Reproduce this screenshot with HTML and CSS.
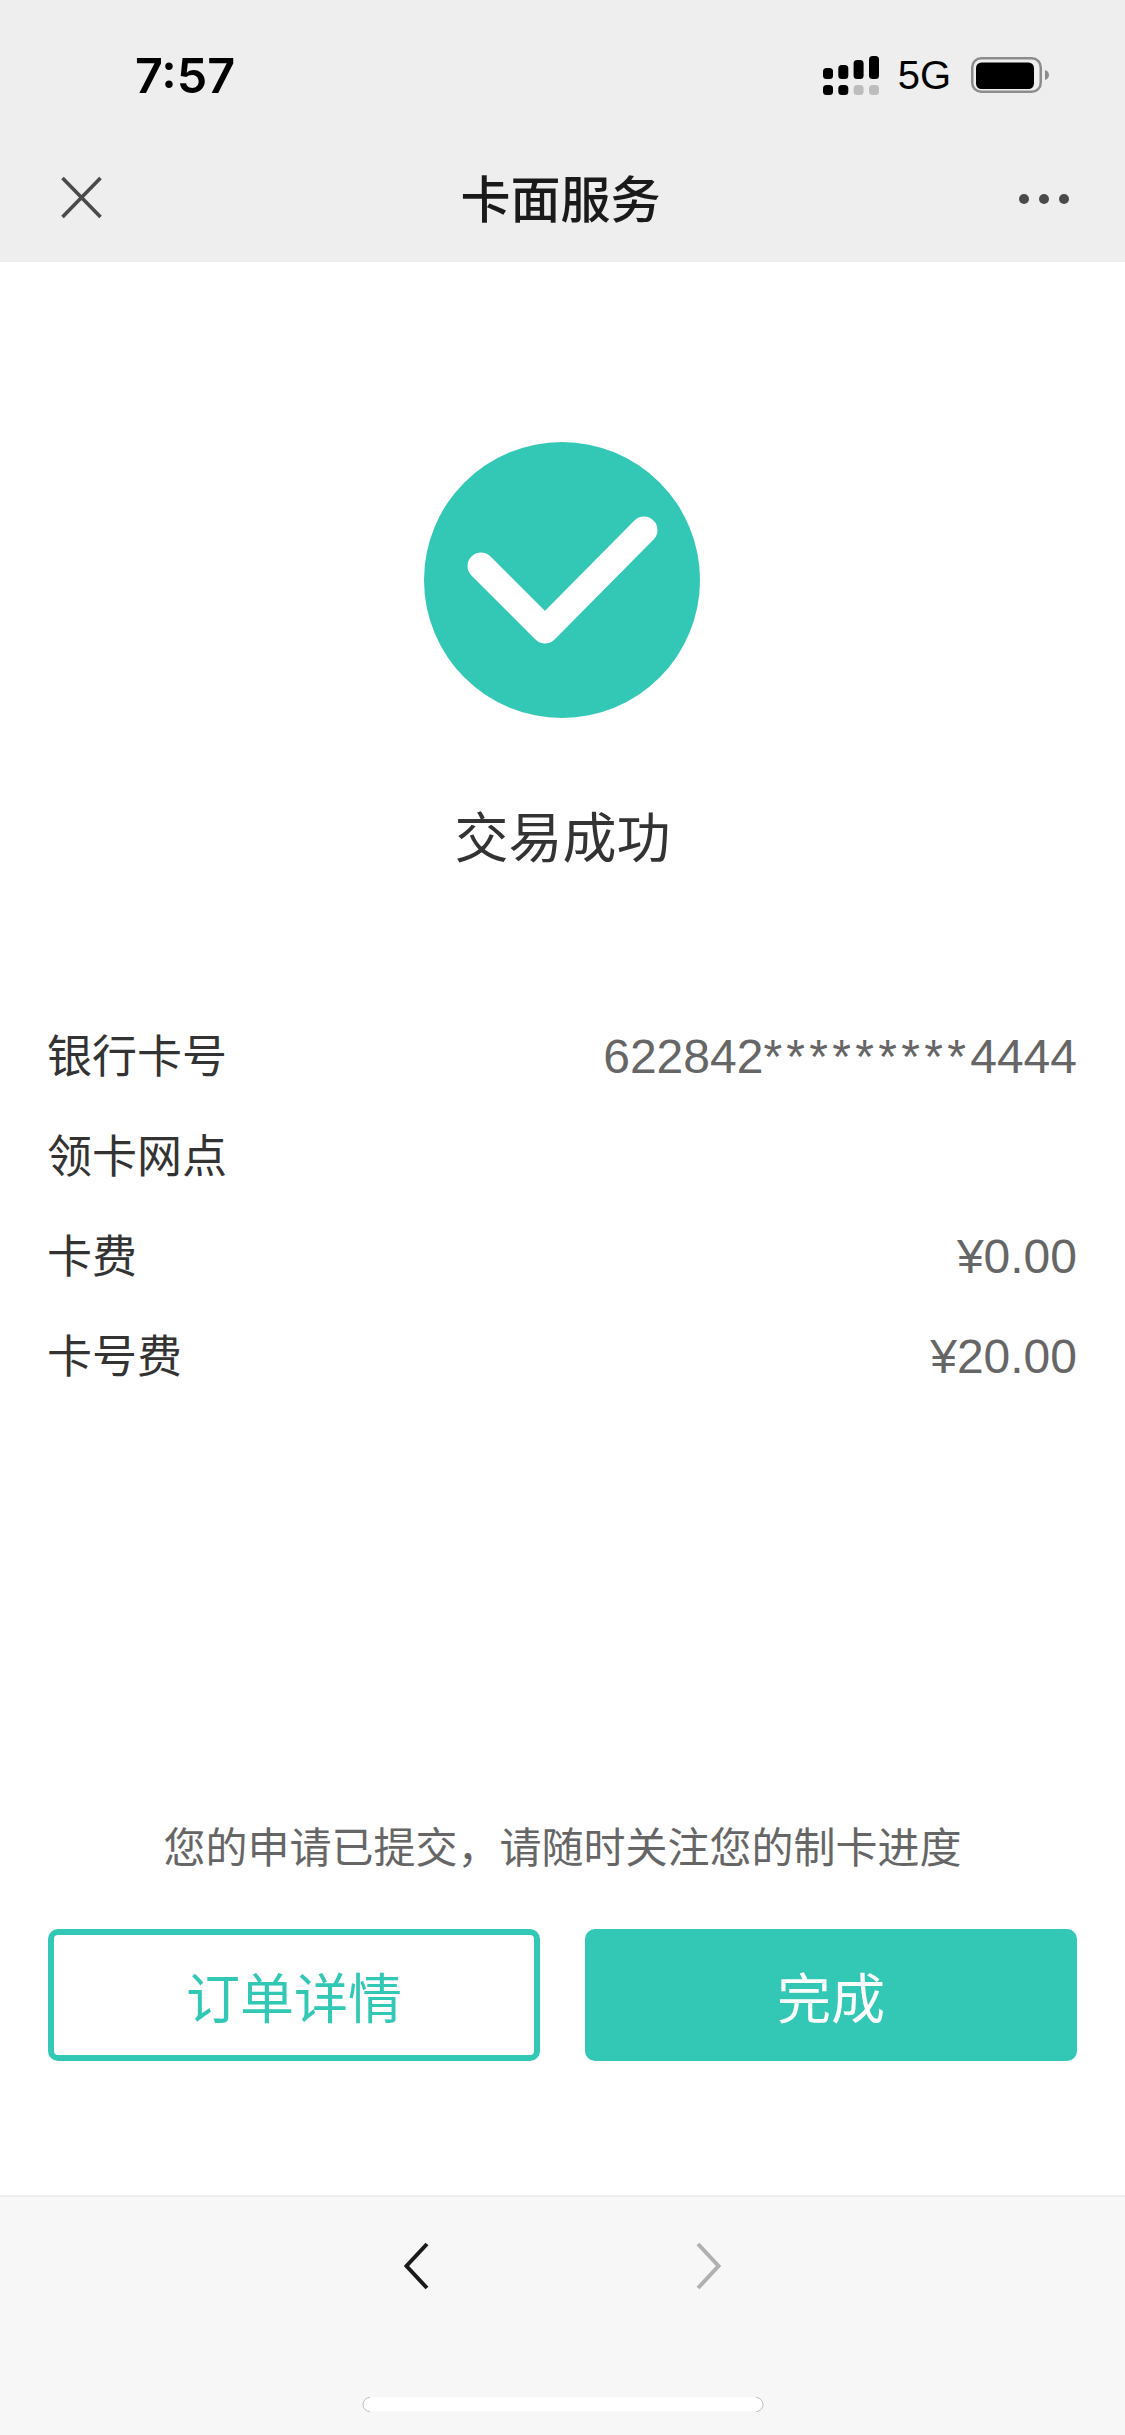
FILE: index.html
```html
<!DOCTYPE html>
<html lang="zh-CN">
<head>
<meta charset="utf-8">
<title>卡面服务</title>
<link rel="stylesheet" href="styles.css">
</head>
<body>
<div class="app">
  <header class="top">
    <div class="status">
      <span class="time">7:57</span>
      <div class="status-right">
        <svg class="signal" width="56" height="39" viewBox="0 0 56 39">
          <g fill="#000">
            <rect x="0" y="12" width="10" height="11" rx="3.5"/>
            <rect x="15.3" y="9" width="10" height="14" rx="3.5"/>
            <rect x="30.6" y="4" width="10" height="19" rx="3.5"/>
            <rect x="46" y="0" width="10" height="23" rx="3.5"/>
            <rect x="0" y="29" width="10" height="10" rx="3.5"/>
            <rect x="15.3" y="29" width="10" height="10" rx="3.5"/>
          </g>
          <g fill="#bdbdbd">
            <rect x="30.6" y="29" width="10" height="10" rx="3.5"/>
            <rect x="46" y="29" width="10" height="10" rx="3.5"/>
          </g>
        </svg>
        <span class="net">5G</span>
        <svg class="battery" width="78" height="36" viewBox="0 0 78 36">
          <rect x="1.25" y="1.25" width="68.5" height="33.5" rx="9" fill="none" stroke="#8c8c8c" stroke-width="2.5"/>
          <rect x="5" y="5.5" width="58" height="26.5" rx="5.5" fill="#000"/>
          <path d="M74 13c2.400.5 4 2.500 4 5s-1.600 4.500-4 5z" fill="#8c8c8c"/>
        </svg>
      </div>
    </div>
    <nav class="nav">
      <svg class="close" width="41" height="43" viewBox="0 0 41 43">
        <path d="M1.500 2 39.500 41M39.500 2 1.500 41" fill="none" stroke="#4a4a4a" stroke-width="3.600"/>
      </svg>
      <h1 class="nav-title">卡面服务</h1>
      <svg class="more" width="50" height="10" viewBox="0 0 50 10">
        <g fill="#4a4a4a">
          <circle cx="5" cy="5" r="5"/>
          <circle cx="25" cy="5" r="5"/>
          <circle cx="45" cy="5" r="5"/>
        </g>
      </svg>
    </nav>
  </header>

  <main class="main">
    <svg class="check" width="276" height="276" viewBox="0 0 276 276">
      <circle cx="138" cy="138" r="138" fill="#32c8b5"/>
      <path d="M57 124 121 188 220 88" fill="none" stroke="#fff" stroke-width="27" stroke-linecap="round" stroke-linejoin="round"/>
    </svg>
    <h2 class="result">交易成功</h2>
    <dl class="rows">
      <div class="row"><dt>银行卡号</dt><dd>622842<span class="stars">*********</span>4444</dd></div>
      <div class="row"><dt>领卡网点</dt><dd></dd></div>
      <div class="row"><dt>卡费</dt><dd>¥0.00</dd></div>
      <div class="row"><dt>卡号费</dt><dd>¥20.00</dd></div>
    </dl>
    <p class="note">您的申请已提交&#xFF0C;请随时关注您的制卡进度</p>
    <div class="actions">
      <button class="btn btn-outline">订单详情</button>
      <button class="btn btn-solid">完成</button>
    </div>
  </main>

  <footer class="bottom">
    <div class="arrows">
      <svg width="25" height="48" viewBox="0 0 25 48">
        <path d="M23 2 2.500 24 23 46" fill="none" stroke="#1a1a1a" stroke-width="4"/>
      </svg>
      <svg width="25" height="48" viewBox="0 0 25 48">
        <path d="M2 2 22.500 24 2 46" fill="none" stroke="#b0b0b0" stroke-width="4"/>
      </svg>
    </div>
    <svg class="home" width="402" height="15" viewBox="0 0 402 15">
      <rect x="0.500" y="0.500" width="401" height="14" rx="7" fill="#fff"/>
      <path d="M8 .5a7 7 0 0 0 0 14M394 .5a7 7 0 0 1 0 14" fill="none" stroke="#bdbdbd" stroke-width="1"/>
    </svg>
  </footer>
</div>
</body>
</html>
```
FILE: styles.css
```css
* { box-sizing: border-box; }
html, body { margin: 0; padding: 0; }
body {
  background: #fff;
  font-family: "Liberation Sans", "Noto Sans CJK SC", sans-serif;
  color: #333;
}
.app {
  display: flex;
  flex-direction: column;
  height: 100vh;
  overflow: hidden;
}
.top { background: #eeeeee; flex: none; }
.status {
  height: 132px;
  display: flex;
  align-items: center;
  justify-content: space-between;
  padding: 0 76px 0 135px;
}
.time {
  font-family: Inter, "Liberation Sans", sans-serif;
  font-size: 48.500px;
  font-weight: 600;
  line-height: 1;
  color: #000;
  margin-top: 20px;
}
.status-right {
  display: flex;
  align-items: center;
  margin-top: 18px;
}
.signal { margin-right: 19px; }
.net {
  font-size: 40px;
  line-height: 1;
  color: #000;
  margin-right: 20px;
}
.nav {
  height: 130px;
  display: grid;
  grid-template-columns: 1fr auto 1fr;
  align-items: center;
  padding: 0 56px 0 61px;
}
.nav-title {
  margin: 0 9px 2px 0;
  font-family: "Noto Sans CJK SC", sans-serif;
  font-size: 50px;
  font-weight: 500;
  line-height: 1;
  color: #1a1a1a;
}
.more { justify-self: end; margin-top: 3px; }
.main {
  flex: 1;
  display: flex;
  flex-direction: column;
  align-items: center;
  padding: 180px 48px 134px;
}
.check { flex: none; display: block; margin-right: 2px; }
.result {
  margin: 79px 0 0;
  font-family: "Noto Sans CJK SC", sans-serif;
  font-size: 54px;
  font-weight: 400;
  line-height: 76px;
  color: #333;
}
.rows { width: 100%; margin: 133px 0 0; }
.row {
  height: 100px;
  display: flex;
  align-items: center;
  justify-content: space-between;
}
.row dt {
  margin-left: -1px;
  font-family: "Noto Sans CJK SC", sans-serif;
  font-size: 45px;
  line-height: 1;
  color: #333;
  padding-bottom: 5px;
}
.row dd {
  margin: 0;
  padding-top: 2px;
  font-size: 48px;
  line-height: 1;
  color: #666;
}
.stars { letter-spacing: 4.300px; }
.note {
  margin: auto 0 0;
  font-family: "Noto Sans CJK SC", sans-serif;
  font-size: 42px;
  line-height: 60px;
  color: #666;
}
.actions {
  width: 100%;
  margin-top: 54px;
  display: flex;
  gap: 45px;
}
.btn {
  flex: 1;
  height: 132px;
  border-radius: 10px;
  border: 6px solid #32c8b5;
  font-family: "Noto Sans CJK SC", sans-serif;
  font-size: 54px;
  padding: 0;
}
.btn-outline { background: #fff; color: #32c8b5; }
.btn-solid { background: #32c8b5; color: #fff; }
.bottom {
  flex: none;
  height: 240px;
  background: #f7f7f7;
  border-top: 2px solid #eeeeee;
  display: flex;
  flex-direction: column;
  align-items: center;
  padding-top: 45px;
}
.arrows { display: flex; gap: 267px; }
.home { margin-top: 107px; }
```
